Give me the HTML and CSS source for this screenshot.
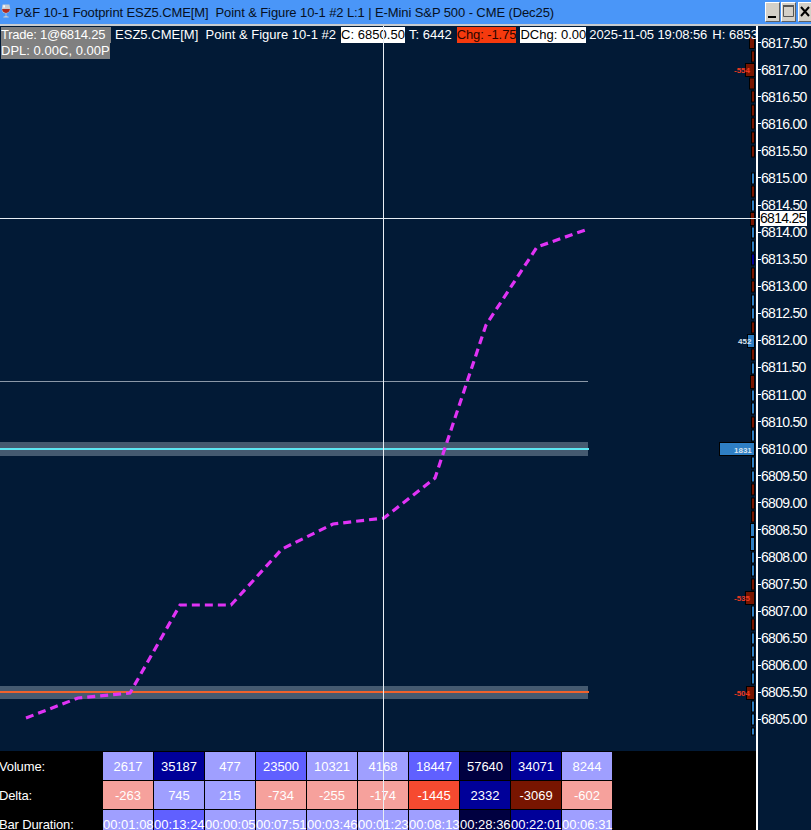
FILE: index.html
```html
<!DOCTYPE html>
<html lang="en">
<head>
<meta charset="utf-8">
<title>P&amp;F 10-1 Footprint</title>
<link rel="stylesheet" href="styles.css">
</head>
<body>
<div class="window">
  <header class="titlebar">
    <svg class="app-icon" width="10" height="18" viewBox="0 0 13 19">
      <path d="M2 1h9l1 6c0 3-2 5-5 5.500V16l3 1v1H3v-1l3-1v-3.500C3 13 1 10 1 7z" fill="#c8ccd0"/>
      <path d="M1.500 7h10c0 3-2 5-5 5s-5-2-5-5z" fill="#b02a20"/>
      <path d="M3 2h2v3H3z" fill="#ffffff"/>
    </svg>
    <span class="title">P&amp;F 10-1 Footprint ESZ5.CME[M]&nbsp; Point &amp; Figure 10-1 #2 L:1 | E-Mini S&amp;P 500 - CME (Dec25)</span>
    <div class="win-buttons">
      <span class="win-btn"><svg width="15" height="19" viewBox="0 0 15 19"><path d="M3 14h8v2H3z" fill="#000"/></svg></span>
      <span class="win-btn"><svg width="15" height="19" viewBox="0 0 15 19"><path d="M2.500 3.500h10v11h-10z" fill="none" stroke="#555"/><path d="M2 3h11v2H2z" fill="#555"/></svg></span>
      <span class="win-btn win-btn-close"><svg width="15" height="19" viewBox="0 0 15 19"><path d="M3 5l8 9M11 5l-8 9" stroke="#000" stroke-width="2" fill="none"/></svg></span>
    </div>
  </header>
  <div class="workspace">
    <div class="chart-col">
      <div class="plot">
        <svg class="plot-svg" width="756" height="725" viewBox="0 26 756 725">
          <rect class="band" x="0" y="442" width="588" height="14"/>
          <rect class="band" x="0" y="686" width="588" height="13"/>
          <line class="line-thin" x1="0" y1="381.500" x2="588" y2="381.500"/>
          <line class="line-cyan" x1="0" y1="449" x2="589" y2="449"/>
          <line class="line-orange" x1="0" y1="692" x2="589" y2="692"/>
          <polyline class="trace" points="26,718 78,698 130,693 180,605 231,605 282,549 333,524 384,518 435,478 486,325 537,247 588,229"/>
          <g class="profile">
            <rect class="r" x="749.500" y="37.500" width="5" height="11"/>
            <rect class="r" x="751.500" y="51" width="3" height="11"/>
            <rect class="r" x="745.500" y="63.500" width="9" height="13"/>
            <rect class="r" x="749.500" y="78" width="5" height="11"/>
            <rect class="r" x="751.500" y="91" width="3" height="11"/>
            <rect class="r" x="751.500" y="105" width="3" height="11"/>
            <rect class="r" x="751.500" y="118" width="3" height="11"/>
            <rect class="r" x="751.500" y="132" width="3" height="11"/>
            <rect class="r" x="751.500" y="146" width="3" height="11"/>
            <rect class="b" x="751.500" y="173" width="3" height="11"/>
            <rect class="r" x="751.500" y="186" width="3" height="11"/>
            <rect class="b" x="751.500" y="200" width="3" height="11"/>
            <rect class="r" x="750.500" y="212.500" width="4" height="13"/>
            <rect class="b" x="751.500" y="227" width="3" height="11"/>
            <rect class="b" x="751.500" y="241" width="3" height="11"/>
            <rect class="n" x="751.500" y="254" width="3" height="11"/>
            <rect class="r" x="751.500" y="268" width="3" height="11"/>
            <rect class="r" x="751.500" y="281" width="3" height="11"/>
            <rect class="b" x="751.500" y="295" width="3" height="11"/>
            <rect class="b" x="751.500" y="308" width="3" height="11"/>
            <rect class="r" x="751.500" y="322" width="3" height="11"/>
            <rect class="b" x="747.500" y="334.500" width="7" height="13"/>
            <rect class="r" x="751.500" y="349" width="3" height="11"/>
            <rect class="b" x="751.500" y="363" width="3" height="11"/>
            <rect class="r" x="750.500" y="375.500" width="4" height="13"/>
            <rect class="b" x="751.500" y="390" width="3" height="11"/>
            <rect class="b" x="751.500" y="403" width="3" height="11"/>
            <rect class="r" x="751.500" y="417" width="3" height="11"/>
            <rect class="b" x="751.500" y="430" width="3" height="11"/>
            <rect class="b" x="719.500" y="442.500" width="35" height="13"/>
            <rect class="b" x="751.500" y="457" width="3" height="11"/>
            <rect class="b" x="751.500" y="471" width="3" height="11"/>
            <rect class="r" x="751.500" y="484" width="3" height="11"/>
            <rect class="r" x="751.500" y="498" width="3" height="11"/>
            <rect class="r" x="751.500" y="511" width="3" height="11"/>
            <rect class="b" x="750.500" y="523.500" width="4" height="13"/>
            <rect class="b" x="750.500" y="537.500" width="4" height="13"/>
            <rect class="b" x="751.500" y="552" width="3" height="11"/>
            <rect class="b" x="751.500" y="565" width="3" height="11"/>
            <rect class="r" x="751.500" y="579" width="3" height="11"/>
            <rect class="r" x="745.500" y="591.500" width="9" height="13"/>
            <rect class="b" x="751.500" y="606" width="3" height="11"/>
            <rect class="r" x="751.500" y="619" width="3" height="11"/>
            <rect class="b" x="751.500" y="633" width="3" height="11"/>
            <rect class="b" x="751.500" y="646" width="3" height="11"/>
            <rect class="b" x="751.500" y="660" width="3" height="11"/>
            <rect class="b" x="751.500" y="673" width="3" height="11"/>
            <rect class="r" x="746.500" y="686.500" width="8" height="13"/>
            <rect class="b" x="751.500" y="701" width="3" height="11"/>
            <rect class="b" x="751.500" y="714" width="3" height="11"/>
            <rect class="b" x="751.500" y="728" width="3" height="7"/>
          </g>
          <text class="pv pv-red" x="734" y="73">-554</text>
          <text class="pv pv-white" x="738" y="344">452</text>
          <text class="pv pv-white" x="734" y="452.500">1831</text>
          <text class="pv pv-red" x="734" y="601">-535</text>
          <text class="pv pv-red" x="734" y="696">-504</text>
        </svg>
        <div class="legend">
          <div class="legend-stack">
            <span class="tag tag-gray tag-trade">Trade: 1@6814.25</span>
            <span class="tag tag-gray tag-dpl">DPL: 0.00C, 0.00P</span>
          </div>
          <span class="tag tag-study">ESZ5.CME[M]&nbsp; Point &amp; Figure 10-1 #2</span>
          <span class="tag tag-white tag-close">C: 6850.50</span>
          <span class="tag">T: 6442</span>
          <span class="tag tag-red">Chg: -1.75</span>
          <span class="tag tag-white">DChg: 0.00</span>
          <span class="tag tag-date">2025-11-05 19:08:56</span>
          <span class="tag">H: 6853</span>
        </div>
      </div>
      <div class="stats">
        <div class="stats-label">Volume:</div>
        <div class="c c1">2617</div><div class="c c3">35187</div><div class="c c1">477</div><div class="c c2">23500</div><div class="c c1">10321</div><div class="c c1">4168</div><div class="c c2">18447</div><div class="c c4">57640</div><div class="c c3">34071</div><div class="c c1">8244</div>
        <div class="stats-label">Delta:</div>
        <div class="c r1">-263</div><div class="c c1">745</div><div class="c c1">215</div><div class="c r1">-734</div><div class="c r1">-255</div><div class="c r1">-174</div><div class="c r2">-1445</div><div class="c c3">2332</div><div class="c r3">-3069</div><div class="c r1">-602</div>
        <div class="stats-label">Bar Duration:</div>
        <div class="c c1">00:01:08</div><div class="c c2">00:13:24</div><div class="c c1">00:00:05</div><div class="c c1">00:07:51</div><div class="c c1">00:03:46</div><div class="c c1">00:01:23</div><div class="c c1">00:08:13</div><div class="c c4">00:28:36</div><div class="c c3">00:22:01</div><div class="c c1">00:06:31</div>
      </div>
    </div>
    <div class="axis">
      <span class="price">6817.50</span><span class="price">6817.00</span><span class="price">6816.50</span><span class="price">6816.00</span><span class="price">6815.50</span><span class="price">6815.00</span><span class="price">6814.50</span><span class="price">6814.00</span><span class="price">6813.50</span><span class="price">6813.00</span><span class="price">6812.50</span><span class="price">6812.00</span><span class="price">6811.50</span><span class="price">6811.00</span><span class="price">6810.50</span><span class="price">6810.00</span><span class="price">6809.50</span><span class="price">6809.00</span><span class="price">6808.50</span><span class="price">6808.00</span><span class="price">6807.50</span><span class="price">6807.00</span><span class="price">6806.50</span><span class="price">6806.00</span><span class="price">6805.50</span><span class="price">6805.00</span>
    </div>
    <div class="cross-v"></div>
    <div class="cross-h"></div>
    <span class="last-price">6814.25</span>
  </div>
</div>
</body>
</html>
```
FILE: styles.css
```css
* { box-sizing: border-box; }
html, body { margin: 0; padding: 0; overflow: hidden; }
body { background: #021a36; font-family: "Liberation Sans", Arial, sans-serif; }
.window { width: 811px; height: 830px; display: flex; flex-direction: column; overflow: hidden; }

.titlebar { height: 26px; flex: none; display: flex; align-items: flex-start; padding: 2px 0 0 1px; background: #4a96f8; border-bottom: 2px solid #c8ccd0; }
.app-icon { flex: none; margin-right: 4px; }
.title { font-size: 13px; line-height: 19px; letter-spacing: -0.1px; color: #061022; white-space: pre; flex: 1; margin-top: 1px; }
.win-buttons { display: flex; gap: 1px; flex: none; margin-right: -3px; }
.win-btn { width: 15px; height: 20px; background: #d4d0c8; border: 1px solid; border-color: #ffffff #606060 #606060 #ffffff; display: flex; }
.win-btn svg { flex: none; margin: -1px; }
.win-btn-close { width: 16px; margin-left: 1px; }

.workspace { position: relative; flex: 1; display: flex; min-height: 0; }
.chart-col { width: 756px; flex: none; display: flex; flex-direction: column; }
.plot { position: relative; height: 725px; flex: none; background: #021a36; }
.plot-svg { display: block; }

.band { fill: #455a70; }
.line-thin { stroke: #8b98a8; stroke-width: 1; }
.line-cyan { stroke: #5ce6f2; stroke-width: 2; }
.line-orange { stroke: #f0622c; stroke-width: 2; }
.trace { fill: none; stroke: #e033f5; stroke-width: 3.200; stroke-dasharray: 8 5; }
.profile rect { stroke: #000000; stroke-width: 1; }
.profile .r { fill: #781500; }
.profile .b { fill: #2f7fc4; }
.profile .n { fill: #000099; }
.pv { font-family: "Liberation Sans", Arial, sans-serif; font-size: 8px; font-weight: bold; }
.pv-red { fill: #f03a20; }
.pv-white { fill: #d8e4f0; }

.legend { position: absolute; left: 1px; top: 1px; right: 0; display: flex; align-items: flex-start; overflow: hidden; white-space: nowrap; font-size: 13px; line-height: 16px; color: #ffffff; }
.legend-stack { display: flex; flex-direction: column; flex: none; width: 110px; margin-right: 4px; }
.tag { flex: none; display: block; margin-right: 4px; letter-spacing: 0.02px; }
.legend-stack .tag { margin-right: 0; }
.tag-gray { background: #808080; }
.tag-trade { width: 110px; letter-spacing: -0.25px; }
.tag-dpl { width: 109px; }
.tag-study { margin-right: 5px; }
.tag-white { background: #ffffff; color: #000000; }
.tag-red { background: #f53a0e; color: #2a0500; letter-spacing: -0.1px; margin-left: 1px; margin-right: 4px; }
.tag-close { margin-right: 4px; }
.tag-date { margin-left: -1px; letter-spacing: -0.1px; margin-right: 5px; }

.stats { flex: 1; background: #000000; display: grid; grid-template-columns: 103px repeat(10, 51px); grid-auto-rows: 29px; padding-top: 1px; font-size: 13px; color: #ffffff; overflow: hidden; }
.stats-label { line-height: 27px; margin-left: -1px; padding-top: 1px; white-space: nowrap; letter-spacing: -0.15px; }
.c { height: 28px; margin-right: 1px; padding-top: 1px; line-height: 27px; text-align: center; white-space: nowrap; font-size: 13px; }
.c1 { background: #9f9fff; }
.c2 { background: #6060ff; }
.c3 { background: #000099; }
.c4 { background: #000040; }
.r1 { background: #f6a19c; }
.r2 { background: #f64a30; }
.r3 { background: #781500; }

.axis { flex: 1; min-width: 0; border-left: 2px solid #ffffff; background: #021a36; display: flex; flex-direction: column; padding-top: 3px; color: #ffffff; }
.price { height: 27.08px; flex: none; display: flex; align-items: center; font-size: 14px; letter-spacing: -0.7px; white-space: nowrap; }
.price::before { content: ""; width: 3px; height: 1px; background: #ffffff; flex: none; }

.cross-v { position: absolute; left: 383px; top: 0; bottom: 0; width: 1px; background: #e8eef4; }
.cross-h { position: absolute; left: 0; top: 192px; width: 760px; height: 1px; background: #e8eef4; }
.last-price { position: absolute; left: 760px; top: 185px; width: 47px; height: 15px; background: #ffffff; color: #000000; font-size: 14px; line-height: 15px; letter-spacing: -0.7px; }
```
